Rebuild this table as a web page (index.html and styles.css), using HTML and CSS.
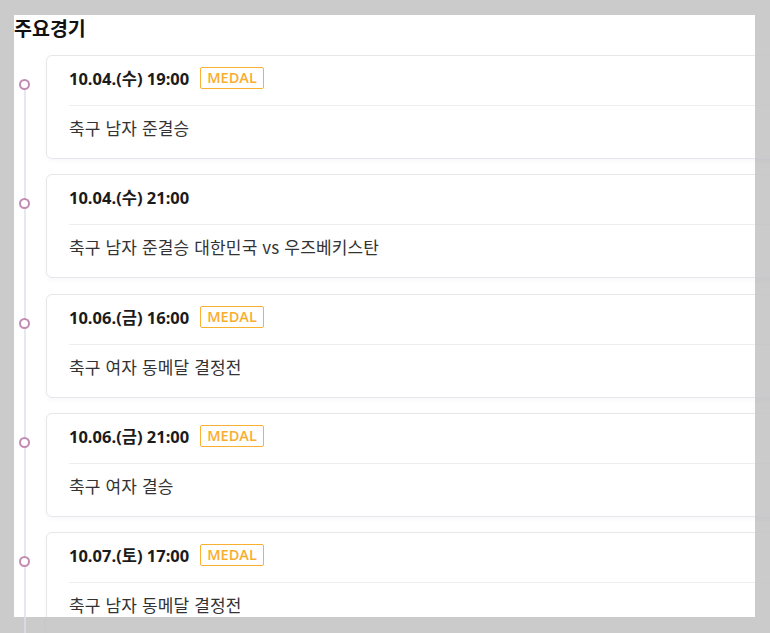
FILE: index.html
```html
<!DOCTYPE html>
<html lang="ko">
<head>
<meta charset="utf-8">
<title>주요경기</title>
<link rel="stylesheet" href="styles.css">
</head>
<body>
<div class="panel">
  <h2 class="title">주요경기</h2>
  <ul class="timeline">
    <li class="item">
      <span class="dot"></span>
      <div class="card">
        <div class="card-head"><span class="date">10.04.(수) 19:00</span><span class="badge">MEDAL</span></div>
        <div class="card-body">축구 남자 준결승</div>
      </div>
    </li>
    <li class="item">
      <span class="dot"></span>
      <div class="card">
        <div class="card-head"><span class="date">10.04.(수) 21:00</span></div>
        <div class="card-body">축구 남자 준결승 대한민국 vs 우즈베키스탄</div>
      </div>
    </li>
    <li class="item">
      <span class="dot"></span>
      <div class="card">
        <div class="card-head"><span class="date">10.06.(금) 16:00</span><span class="badge">MEDAL</span></div>
        <div class="card-body">축구 여자 동메달 결정전</div>
      </div>
    </li>
    <li class="item">
      <span class="dot"></span>
      <div class="card">
        <div class="card-head"><span class="date">10.06.(금) 21:00</span><span class="badge">MEDAL</span></div>
        <div class="card-body">축구 여자 결승</div>
      </div>
    </li>
    <li class="item">
      <span class="dot"></span>
      <div class="card">
        <div class="card-head"><span class="date">10.07.(토) 17:00</span><span class="badge">MEDAL</span></div>
        <div class="card-body">축구 남자 동메달 결정전</div>
      </div>
    </li>
  </ul>
</div>
</body>
</html>
```
FILE: styles.css
```css
html, body {
  margin: 0;
  padding: 0;
}
body {
  background: #cbcbcb;
  padding: 15px 0 0 14px;
  font-family: "Noto Sans CJK KR", "Noto Sans", sans-serif;
  color: #222;
  overflow: hidden;
  height: 633px;
  box-sizing: border-box;
}
.panel {
  width: 741px;
  height: 602px;
  background: #fff;
}
.title {
  margin: 0;
  font-size: 19.5px;
  font-weight: 700;
  line-height: 26px;
  color: #111;
}
.timeline {
  list-style: none;
  margin: 14px 0 0;
  padding: 0;
  position: relative;
}
.timeline::before {
  content: "";
  position: absolute;
  left: 10px;
  top: 24px;
  width: 2px;
  height: 700px;
  background: rgba(220, 224, 236, 0.75);
}
.item {
  display: flex;
  align-items: flex-start;
  margin-bottom: 15.25px;
}
.dot {
  position: relative;
  flex: 0 0 auto;
  box-sizing: border-box;
  width: 11px;
  height: 11px;
  margin: 24px 16px 0 5px;
  border: 2px solid #c48bb2;
  border-radius: 50%;
  background: #fff;
}
.card {
  flex: 0 0 auto;
  width: 780px;
  border: 1px solid rgba(200, 200, 210, 0.45);
  border-radius: 6px;
  padding: 0 22px;
  box-shadow: 0 2px 4px rgba(120, 110, 160, 0.05);
}
.card-head {
  display: flex;
  align-items: center;
  gap: 11px;
  height: 22px;
  padding: 11px 0 16px;
  border-bottom: 1px solid rgba(200, 200, 210, 0.3);
}
.date {
  font-family: "Open Sans", "Noto Sans CJK KR", sans-serif;
  font-size: 16.5px;
  font-weight: 700;
  color: #1b1b1b;
}
.badge {
  box-sizing: border-box;
  height: 22px;
  line-height: 20px;
  padding: 0 6px;
  border: 1px solid #f9b132;
  border-radius: 2px;
  color: #f9ad2f;
  font-family: "Open Sans", sans-serif;
  font-size: 14.5px;
  font-weight: 600;
}
.card-body {
  padding: 10px 0 18px;
  line-height: 24px;
  font-size: 17px;
  letter-spacing: 0.15px;
  color: #333;
}
```
